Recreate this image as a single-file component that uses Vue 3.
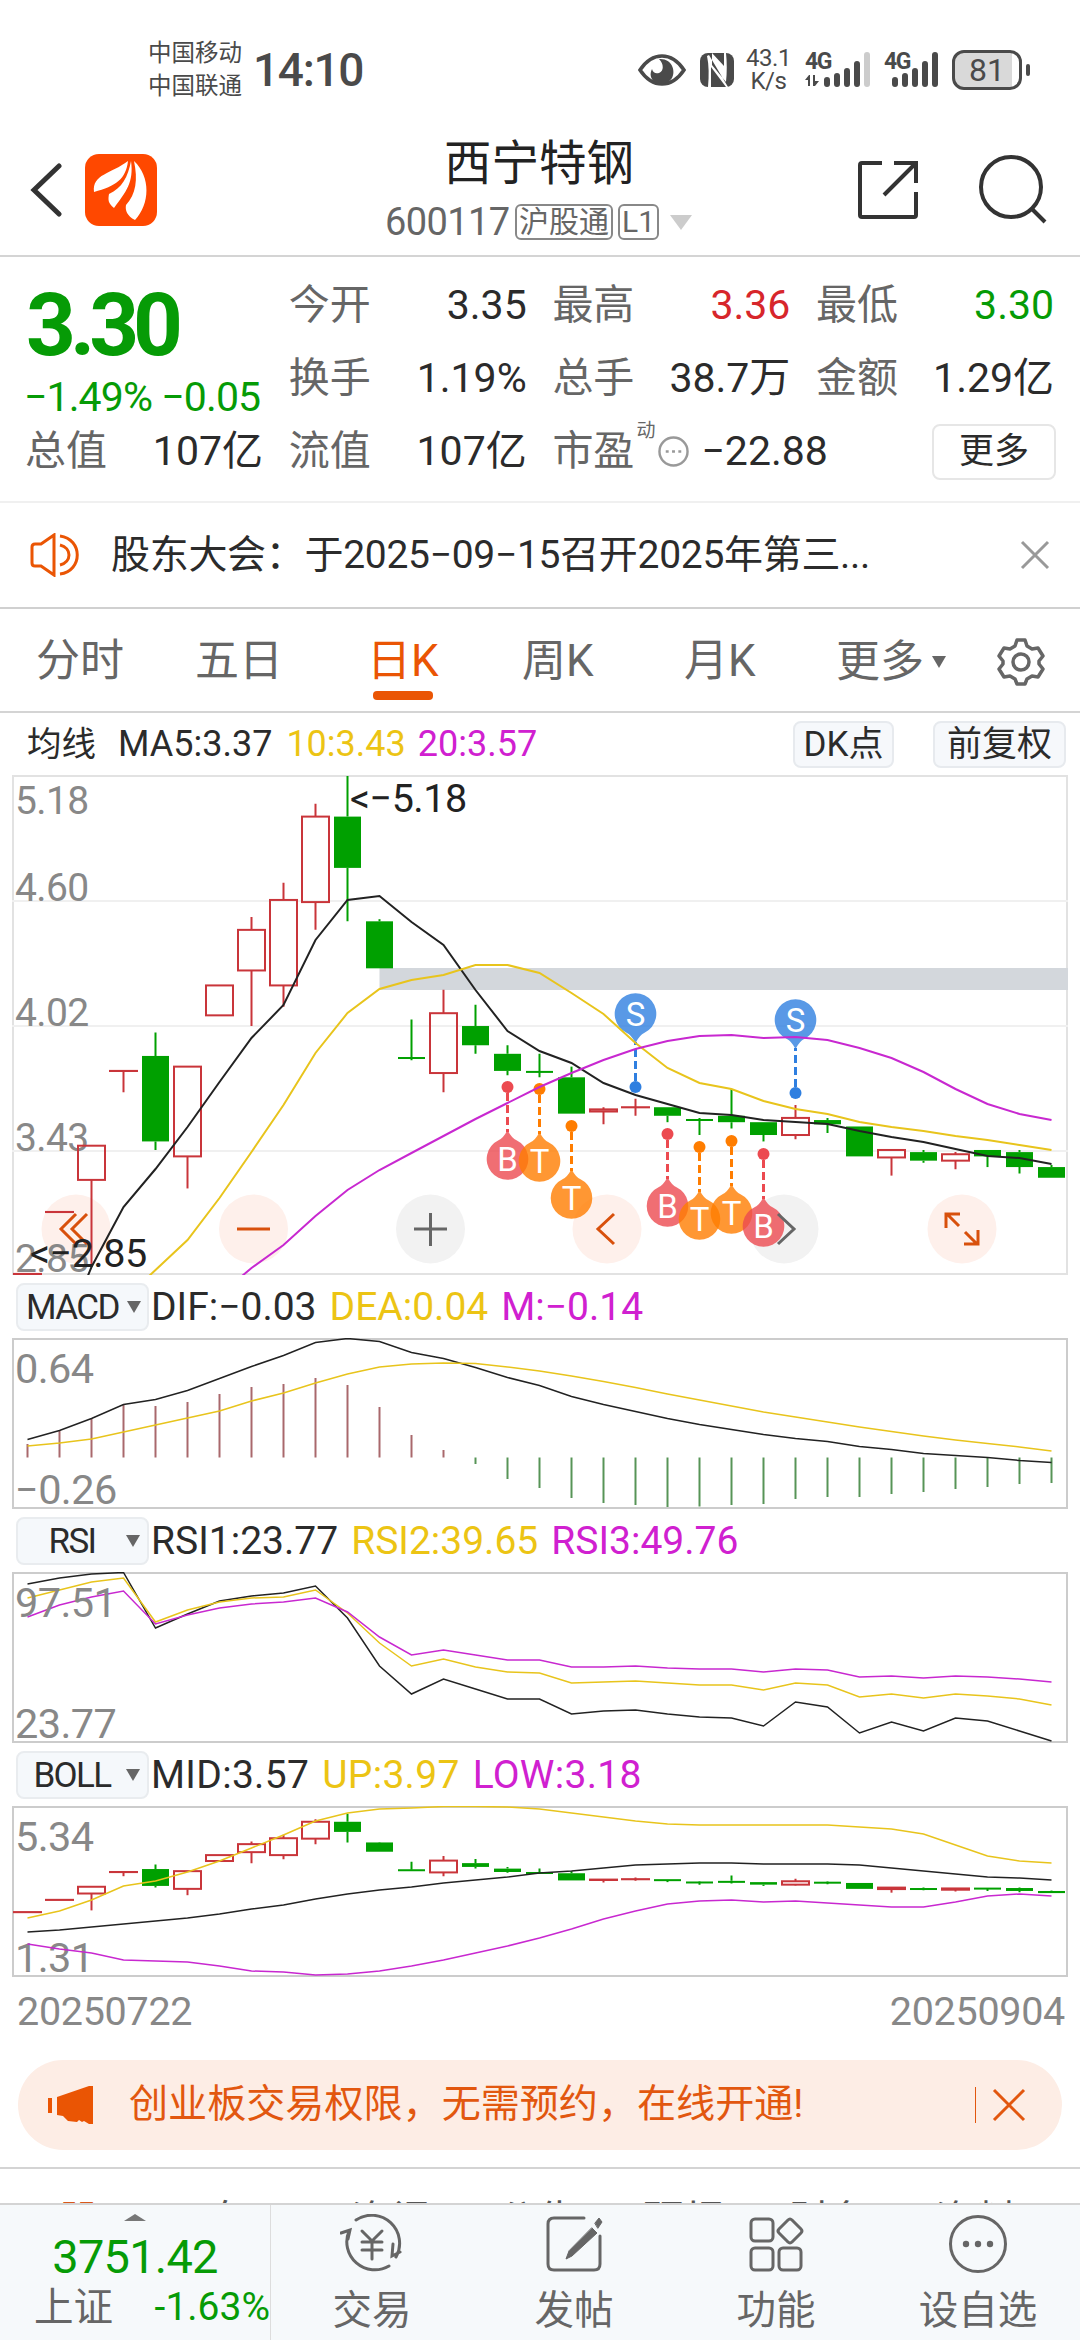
<!-- StockDetail -->
<template>
    <div class="page">
        <div class="status">
            <div class="carriers">
                <span>中国移动</span>
                <span>中国联通</span>
            </div>
            <span class="clock">14:10</span>
            <div class="status-right">
                <svg class="eye" viewBox="0 0 48 34">
                    <path d="M2 17C8 8 15 3 24 3s16 5 22 14c-6 9-13 14-22 14S8 26 2 17z" fill="none" stroke="#4a4a4a" stroke-width="3.6" />
                    <path d="M21 6c13-1 17 12 13 19-5 8-18 8-21-1-1-3 0-6 1-8 1 4 4 5 7 4 5-2 5-9 0-14z" fill="#4a4a4a" />
                </svg>
                <svg class="nfc" viewBox="0 0 34 34">
                    <rect width="34" height="34" rx="8" fill="#4a4a4a" />
                    <path d="M7 3c2 9 2 20 1 31h3V14l15 20h2L9 2zM12 0l12 13V0h2c1 9 1 20 0 29L12 12z" fill="#fff" />
                </svg>
                <div class="speed"><span>43.1</span><span>K/s</span></div>
                <svg class="signal" viewBox="0 0 66 38">
                    <text x="0" y="18" class="net">4G</text>
                    <path d="M0 29l4-5h1v11H3v-6zM8 24h2v6h4l-4 5H8z" fill="#4a4a4a" />
                    <path d="M22 29v4M32 25v8M42 20v13M52 13v20" class="bars" />
                    <path d="M62 4v29" class="bars off" />
                </svg>
                <svg class="signal second" viewBox="0 0 56 38">
                    <text x="0" y="18" class="net">4G</text>
                    <path d="M11 29v4M21 25v8M31 20v13M41 13v20M51 4v29" class="bars" />
                </svg>
                <div class="battery"><span>81</span></div>
                <i class="battery-cap"></i>
            </div>
        </div>

        <header class="header">
            <svg class="back" viewBox="0 0 32 54"><path d="M29 3L4 27l25 24" /></svg>
            <svg class="logo" viewBox="0 0 72 72">
                <rect width="72" height="72" rx="14" fill="#ff4800" />
                <path d="M9 38C7 20 26 20 43 7 41 25 31 32 9 38z" fill="#fff" />
                <path d="M29 54C23 49 23 46 24 40 37 34 43 23 46 7c3 21-5 31-17 47z" fill="#fff" />
                <path d="M50 66c-8-4-10-10-9-15 10-11 12-25 8-44 17 16 16 43 1 59z" fill="#fff" />
            </svg>
            <div class="heading">
                <h1>西宁特钢</h1>
                <div class="code">
                    <span class="num">600117</span>
                    <span class="tag">沪股通</span>
                    <span class="tag level">L1</span>
                    <i class="caret"></i>
                </div>
            </div>
            <svg class="share" viewBox="0 0 60 60">
                <path d="M24 3H4q-2 0-2 2v50q0 2 2 2h52q2 0 2-2V32M36 3h22v20M57 4L26 35" />
            </svg>
            <svg class="search" viewBox="0 0 70 70">
                <circle cx="33" cy="32" r="30" /><path d="M54 54l13 13" />
            </svg>
        </header>

        <section class="quote">
            <div class="price">
                <strong>3.30</strong>
                <span>−1.49% −0.05</span>
            </div>
            <div v-for="q in quotes" :key="q.label" class="cell">
                <label>{{ q.label }}</label>
                <span :class="q.tone">{{ q.value }}</span>
            </div>
            <div class="cell pe">
                <label>市盈</label>
                <sup>动</sup>
                <svg viewBox="0 0 32 32">
                    <circle cx="16" cy="16" r="14.500" />
                    <path d="M8 16h3M14.500 16h3M21 16h3" />
                </svg>
                <span>−22.88</span>
            </div>
            <div class="cell last"><button class="more">更多</button></div>
        </section>

        <div class="notice">
            <svg class="speaker" viewBox="0 0 50 44">
                <path d="M11 11L24 2v40L11 33H5q-3 0-3-3V14q0-3 3-3z" />
                <path d="M30 3c23 3 23 35 0 38M30 12c12 3 12 17 0 20" />
            </svg>
            <p>股东大会：于2025−09−15召开2025年第三...</p>
            <svg class="close" viewBox="0 0 30 30"><path d="M2 2l26 26M28 2L2 28" /></svg>
        </div>

        <nav class="tabs">
            <a v-for="t in tabs" :key="t" :class="{ active: t === current }" @click="current = t"><span>{{ t }}</span></a>
            <a class="tab-more">更多<i></i></a>
            <svg class="gear" viewBox="0 0 48 48">
                <path d="M20 2h8l2 6 5 3 6-1 5 8-4 5v3l4 5-5 8-6-1-5 3-2 5h-8l-2-5-5-3-6 1-5-8 4-5v-3l-4-5 5-8 6 1 5-3z" />
                <circle cx="24" cy="24" r="8" />
            </svg>
        </nav>

        <div class="ma-row">
            <span class="ma-name">均线</span>
            <span class="ma5">MA5:3.37</span>
            <span class="yellow">10:3.43</span>
            <span class="purple">20:3.57</span>
            <button class="dk">DK点</button>
            <button class="adj">前复权</button>
        </div>

        <svg class="chart main" viewBox="0 0 1056 500">
            <path d="M0 126h1056M0 251h1056M0 376h1056" stroke="#f0f0f0" stroke-width="2" />
            <rect x="367.500" y="193" width="688.500" height="22" fill="#d3d7dc" />
            <circle v-for="b in buttons" :key="b.x" :cx="b.x" cy="454" r="34.500" :fill="b.grey ? '#f2f2f2' : '#fef0eb'" />
            <g class="axis">
                <text x="3" y="39">5.18</text>
                <text x="3" y="126">4.60</text>
                <text x="3" y="251">4.02</text>
                <text x="3" y="376">3.43</text>
                <text x="3" y="497">2.85</text>
            </g>
            <g v-for="(c, i) in mainCandles" :key="i" :class="c.up ? 'up' : 'down'">
                <path :d="c.wick" />
                <rect :x="c.x" :y="c.y" :width="c.w" :height="c.h" />
            </g>
            <polyline :points="line(ma5, 1)" class="l-black" />
            <g class="pins">
                <g v-for="p in pins" :key="p.i" :class="p.t" :transform="`translate(${px(p.i)} ${p.y})`">
                    <circle r="6" />
                    <path :d="p.t === 'S' ? 'M0-6V-45' : 'M0 6V45'" class="dash" />
                    <g :transform="p.t === 'S' ? 'translate(0 -73)' : 'translate(0 72)'">
                        <path :transform="p.t === 'S' ? 'rotate(180)' : ''"
                            d="M0-29Q4-21 9-18.700A20.800 20.800 0 1 1-9-18.700Q-4-21 0-29z" class="drop" />
                        <text y="12">{{ p.t }}</text>
                    </g>
                </g>
            </g>
            <polyline :points="line(ma10, 3)" class="l-yellow" />
            <polyline :points="line(ma20, 6)" class="l-purple" />
            <g class="btn-icons">
                <path d="M64 439L49 454l15 15M75 439L60 454l15 15M225 454h33" />
                <path d="M602 439L586 454l16 15M947 451l-12-12M934 453v-14h14M953 457l12 12M966 455v14h-14" />
                <path d="M402 454h33M418.500 438v33M766 439l16 15-16 15" class="grey" />
            </g>
            <g class="mark">
                <text x="338" y="37">&lt;−5.18</text>
                <text x="18" y="492">&lt;−2.85</text>
            </g>
        </svg>

        <div class="ind-row">
            <button><b>MACD</b><i></i></button>
            <span>DIF:−0.03</span><span class="yellow">DEA:0.04</span><span class="purple">M:−0.14</span>
        </div>
        <svg class="chart sub" viewBox="0 0 1056 171">
            <g class="axis"><text x="3" y="45">0.64</text><text x="3" y="166">−0.26</text></g>
            <path v-for="(y, i) in macdBars" :key="i" :d="`M${px(i)} 119.5V${y}`" :stroke="y < 119 ? '#a9686c' : '#579457'" stroke-width="2" />
            <polyline :points="line(dif)" class="l-black" />
            <polyline :points="line(dea)" class="l-yellow" />
        </svg>

        <div class="ind-row">
            <button><b>RSI</b><i></i></button>
            <span>RSI1:23.77</span><span class="yellow">RSI2:39.65</span><span class="purple">RSI3:49.76</span>
        </div>
        <svg class="chart sub" viewBox="0 0 1056 171">
            <polyline :points="line(rsi1)" class="l-black" />
            <polyline :points="line(rsi2)" class="l-yellow" />
            <polyline :points="line(rsi3)" class="l-purple" />
            <g class="axis"><text x="3" y="45">97.51</text><text x="3" y="166">23.77</text></g>
        </svg>

        <div class="ind-row boll">
            <button><b>BOLL</b><i></i></button>
            <span>MID:3.57</span><span class="yellow">UP:3.97</span><span class="purple">LOW:3.18</span>
        </div>
        <svg class="chart sub" viewBox="0 0 1056 171">
            <g class="axis"><text x="3" y="45">5.34</text><text x="3" y="166">1.31</text></g>
            <g v-for="(c, i) in bollCandles" :key="i" :class="c.up ? 'up' : 'down'">
                <path :d="c.wick" />
                <rect :x="c.x" :y="c.y" :width="c.w" :height="c.h" />
            </g>
            <polyline :points="line(bollMid)" class="l-black" />
            <polyline :points="line(bollUp)" class="l-yellow" />
            <polyline :points="line(bollLow)" class="l-purple" />
        </svg>

        <div class="dates"><span>20250722</span><span>20250904</span></div>

        <div class="banner">
            <svg class="horn" viewBox="0 0 46 40">
                <path d="M0 13h4v15H0zM9 12L41 1h4v38h-4l-5-3-2 1-3-2-2 2-9-1-5-5-6-1z" />
            </svg>
            <p>创业板交易权限，无需预约，在线开通!</p>
            <i class="bar"></i>
            <svg class="close" viewBox="0 0 34 34"><path d="M2 2l30 30M32 2L2 32" /></svg>
        </div>

        <div class="strip">
            <span v-for="(s, i) in strip" :key="s" :class="{ active: i === 0 }">{{ s }}</span>
        </div>

        <footer class="footer">
            <div class="index">
                <i></i>
                <strong>3751.42</strong>
                <div><span>上证</span><em>-1.63%</em></div>
            </div>
            <a>
                <svg viewBox="0 0 64 60">
                    <path d="M16 6A28 28 0 0 1 56 43M60 38l-8 4 1-12M49 52A28 28 0 0 1 9 17M1 19l9-3-2 9" />
                    <path d="M22 17l10 10 10-10M22 28h20M22 36h20M32 27v18" />
                </svg>
                交易
            </a>
            <a>
                <svg viewBox="0 0 64 60">
                    <path d="M42 4H12q-6 0-6 6v40q0 6 6 6h40q6 0 6-6V22" />
                    <path d="M50 14l5 5-25 23-6 3 3-8zM53 9l4-5 3 4-4 6z" fill="#666" stroke-width="1" />
                </svg>
                发帖
            </a>
            <a>
                <svg viewBox="0 0 64 60">
                    <rect x="7" y="5" width="22" height="22" rx="4" />
                    <rect x="7" y="34" width="22" height="22" rx="4" />
                    <rect x="35" y="34" width="22" height="22" rx="4" />
                    <path d="M44 6q2-2 4 0l9 9q2 2 0 4l-9 9q-2 2-4 0l-9-9q-2-2 0-4z" />
                </svg>
                功能
            </a>
            <a>
                <svg viewBox="0 0 64 60">
                    <circle cx="32" cy="30" r="27.500" />
                    <g class="dots"><circle cx="20" cy="30" r="3.200" /><circle cx="32" cy="30" r="3.200" /><circle cx="44" cy="30" r="3.200" /></g>
                </svg>
                设自选
            </a>
        </footer>
    </div>
</template>

<script setup>
import { ref } from 'vue';

const tabs = ['分时', '五日', '日K', '周K', '月K'];
const current = ref('日K');
const strip = ['股吧', '盘口', '资讯', '公告', '研报', '财务', '资料'];

const quotes = [
    { label: '今开', value: '3.35' },
    { label: '最高', value: '3.36', tone: 'red' },
    { label: '最低', value: '3.30', tone: 'green' },
    { label: '换手', value: '1.19%' },
    { label: '总手', value: '38.7万' },
    { label: '金额', value: '1.29亿' },
    { label: '总值', value: '107亿' },
    { label: '流值', value: '107亿' },
];

const buttons = [
    { x: 64 }, { x: 241.5 }, { x: 418.5, grey: true },
    { x: 595 }, { x: 772, grey: true }, { x: 950 },
];

// open, close, high, low
const days = [
    [2.85, 2.85, 2.85, 2.85], [3.14, 3.14, 3.14, 3.14], [3.29, 3.45, 3.45, 2.89], [3.8, 3.8, 3.8, 3.7],
    [3.87, 3.47, 3.98, 3.43], [3.4, 3.82, 3.82, 3.25], [4.06, 4.2, 4.2, 4.06], [4.27, 4.46, 4.52, 4.01],
    [4.2, 4.6, 4.68, 4.1], [4.59, 4.99, 5.05, 4.46], [4.99, 4.75, 5.18, 4.5], [4.5, 4.28, 4.51, 4.28],
    [3.865, 3.86, 4.04, 3.85], [3.79, 4.07, 4.18, 3.7], [4.01, 3.92, 4.11, 3.88], [3.88, 3.8, 3.92, 3.78],
    [3.8, 3.795, 3.88, 3.77], [3.77, 3.6, 3.82, 3.6], [3.61, 3.62, 3.63, 3.55], [3.63, 3.63, 3.67, 3.59],
    [3.63, 3.59, 3.63, 3.56], [3.575, 3.57, 3.58, 3.5], [3.59, 3.56, 3.715, 3.53], [3.56, 3.5, 3.56, 3.47],
    [3.5, 3.58, 3.64, 3.48], [3.57, 3.55, 3.58, 3.51], [3.54, 3.4, 3.54, 3.4], [3.395, 3.43, 3.43, 3.31],
    [3.42, 3.38, 3.43, 3.37], [3.38, 3.41, 3.42, 3.34], [3.43, 3.4, 3.43, 3.35], [3.42, 3.35, 3.43, 3.32],
    [3.35, 3.3, 3.36, 3.3],
];

const px = (i) => +(15.5 + i * 32).toFixed(1);
const line = (ys, from = 0) => ys.map((y, i) => `${px(i + from)},${y}`).join(' ');

const candles = (top, scale) => days.map(([open, close, high, low], i) => {
    const y = (p) => (top - p) * scale + 1;
    const up = close >= open;
    const t = y(Math.max(open, close));
    const b = y(Math.min(open, close));
    const x = px(i);
    // rising bodies are hollow, so only the wick outside of the body is drawn
    return {
        up,
        wick: `M${x} ${y(high)}V${t}M${x} ${b}V${y(low)}`,
        x: x - 13.5,
        y: t,
        w: 27,
        h: up ? Math.max(b - t, 0.1) : Math.max(b - t, 2),
    };
});
const mainCandles = candles(5.18, 213.7);
const bollCandles = candles(5.34, 42.2);

const ma5 = [570, 492, 432, 394, 352, 307, 263, 230, 165, 125, 121, 147, 170, 215, 256, 276, 288, 308, 320, 329, 338, 340, 345, 347, 349, 356, 362, 367, 374, 381, 383, 389];
const ma10 = [525, 495, 465, 423, 377, 330, 278, 238, 214, 205, 200, 190, 190, 198, 218, 239, 268, 293, 308, 314, 326, 334, 339, 347, 352, 356, 361, 365, 370, 375];
const ma20 = [520, 493, 470, 441, 415, 395, 378, 361, 344, 328, 312, 298, 285, 274, 266, 261, 260, 263, 262, 265, 273, 283, 297, 314, 329, 339, 345];

const pins = [
    { t: 'B', i: 15, y: 312 }, { t: 'T', i: 16, y: 314 }, { t: 'T', i: 17, y: 351 },
    { t: 'S', i: 19, y: 312 }, { t: 'B', i: 20, y: 359 }, { t: 'T', i: 21, y: 372 },
    { t: 'T', i: 22, y: 366 }, { t: 'B', i: 23, y: 379 }, { t: 'S', i: 24, y: 318 },
];

const dif = [101.5, 92.5, 80.5, 66.5, 61.5, 52.5, 40.5, 28.5, 17.5, 4.5, 0.5, 3.5, 14.5, 20.5, 29.5, 39.5, 47.5, 58.5, 66.5, 73.5, 80.5, 86.5, 91.5, 96.5, 100.5, 103.5, 108.5, 111.5, 115.5, 117.5, 119.5, 122.5, 124.5];
const dea = [108, 105, 101, 94, 87, 80, 73, 63, 55, 45, 36, 29, 26, 25, 25.5, 29, 33, 38, 43.5, 49.5, 56, 62, 68, 74, 79, 84, 89, 93.5, 98, 102, 105.5, 109, 113];
const macdBars = [106, 93, 81, 67, 68, 64, 56, 49, 46, 40, 47, 69, 97, 112, 126, 141, 150, 160, 165, 167, 169, 168.5, 167, 166, 161, 159, 159, 156, 154, 151, 149, 146, 145];

const rsi1 = [12, 6, 2, 0.5, 56, 42, 29, 24, 21, 14, 46, 94, 122, 107, 117, 127, 127, 142, 139, 138, 142, 145, 146, 154, 130, 135, 161, 150, 159, 146, 149, 159, 169];
const rsi2 = [26, 18, 10, 6, 50, 38, 30, 26, 25, 18, 41, 71, 94, 87, 95, 100, 101, 111, 110, 109, 111, 113, 113, 118, 111, 113, 125, 122, 126, 122, 124, 127, 133];
const rsi3 = [45, 33, 25, 19, 52, 43, 36, 32, 30, 26, 40, 65, 83, 78, 83, 88, 88, 95, 95, 94, 96, 97, 97, 100, 97, 98, 105, 104, 106, 104, 105, 107, 110];

const bollUp = [112, 105, 94, 80, 75, 66, 55, 42, 29, 15, 7, 3, 2, 0.5, 0.5, 1, 3, 7, 11, 15, 18, 19, 19, 19, 19, 19, 21, 23, 28, 39, 50, 55, 57];
const bollMid = [126, 124, 121, 118, 115, 112, 108, 103, 99, 93, 88, 84, 81, 77, 74, 71, 67, 65, 62, 59, 58, 57, 57, 58, 58, 58, 59, 62, 65, 68, 71, 72, 74];
const bollLow = [138, 143, 147, 154, 155, 156, 160, 165, 166, 169, 168, 165, 160, 154, 147, 140, 132, 123, 113, 105, 98, 95, 94, 96, 95, 97, 99, 101, 101, 96, 90, 88, 90];
</script>

<style>
body {
    margin: 0;
    background: #fff;
}
</style>

<style scoped>
.page {
    width: 1080px;
    height: 2340px;
    overflow: hidden;
    display: flex;
    flex-direction: column;
    background: #fff;
    color: #2b2b2b;
    font-family: Roboto, "Noto Sans CJK SC", sans-serif;
    line-height: 1;
}

.page > * {
    flex: none;
    box-sizing: border-box;
}

button {
    box-sizing: border-box;
    padding: 0;
    font-family: inherit;
    color: inherit;
    line-height: 1;
    white-space: nowrap;
}

p {
    margin: 0;
    white-space: nowrap;
}

svg {
    display: block;
    flex: none;
}

/* status bar */
.status {
    height: 140px;
    padding: 0 50px 0 148px;
    display: flex;
    align-items: center;
    color: #4a4a4a;
}

.carriers {
    display: flex;
    flex-direction: column;
    gap: 10px;
    font-size: 23.5px;
}

.clock {
    margin-left: 11px;
    font-size: 46px;
    font-weight: 500;
    letter-spacing: -1.3px;
}

.status-right {
    margin-left: auto;
    display: flex;
    align-items: center;
}

.eye {
    width: 48px;
    height: 34px;
    margin-right: 14px;
}

.nfc {
    width: 34px;
    height: 34px;
    margin-right: 13px;
}

.speed {
    width: 43px;
    display: flex;
    flex-direction: column;
    align-items: center;
    font-size: 24px;
    line-height: 23px;
    letter-spacing: -0.5px;
    margin-right: 15px;
}

.signal {
    width: 66px;
    height: 38px;
    margin-right: 13px;
}

.signal.second {
    width: 56px;
    margin-right: 12px;
}

.net {
    font-size: 23px;
    font-weight: 700;
    fill: #4a4a4a;
    letter-spacing: -1.5px;
}

.bars {
    stroke: #4a4a4a;
    stroke-width: 6;
    stroke-linecap: round;
}

.off {
    stroke: #ccc;
}

.battery {
    width: 70px;
    height: 40px;
    box-sizing: border-box;
    border: 3px solid #4a4a4a;
    border-radius: 12px;
    background: linear-gradient(90deg, #d9d9d9 57px, #fff 57px);
    display: flex;
    align-items: center;
    justify-content: center;
    font-size: 32px;
}

.battery-cap {
    width: 4px;
    height: 12px;
    margin-left: 4px;
    border-radius: 2px;
    background: #4a4a4a;
}

/* header */
.header {
    height: 117px;
    padding: 0 34px 16px 30px;
    border-bottom: 2px solid #d4d4d4;
    display: flex;
    align-items: center;
}

.back {
    width: 32px;
    height: 54px;
    fill: none;
    stroke: #333;
    stroke-width: 5;
    stroke-linecap: round;
}

.logo {
    width: 72px;
    height: 72px;
    margin-left: 23px;
}

.heading {
    flex: 1;
    margin-left: 228px;
    display: flex;
    flex-direction: column;
}

h1 {
    margin: 2px 0 16px 59px;
    font-size: 47.5px;
    font-weight: 400;
    color: #222;
    line-height: 47px;
}

.code {
    display: flex;
    align-items: center;
    color: #666;
    height: 36px;
}

.code .num {
    font-size: 38px;
    letter-spacing: -0.6px;
    width: 130px;
}

.tag {
    box-sizing: border-box;
    width: 98px;
    height: 36px;
    border: 2px solid #888;
    border-radius: 6px;
    font-size: 30px;
    line-height: 31px;
    text-align: center;
}

.level {
    width: 41px;
    margin-left: 5px;
}

.caret {
    margin-left: 11px;
    border: 11px solid transparent;
    border-top: 15px solid #ccc;
    border-bottom: 0;
}

.share,
.search {
    fill: none;
    stroke: #333;
    stroke-width: 4;
}

.share {
    width: 60px;
    height: 60px;
    margin-right: 60px;
}

.search {
    width: 70px;
    height: 70px;
    margin-right: -2px;
}

/* quote grid */
.quote {
    height: 246px;
    padding: 12px 26px 13px;
    border-bottom: 2px solid #f0f0f0;
    display: grid;
    grid-template-columns: repeat(4, 237px);
    grid-template-rows: repeat(3, 73px);
    column-gap: 26.7px;
}

.price {
    grid-row: 1 / 3;
    display: flex;
    flex-direction: column;
    color: #069b06;
    padding-top: 12px;
    white-space: nowrap;
}

.price strong {
    font-size: 87px;
    font-weight: 700;
    letter-spacing: -6px;
    line-height: 88px;
}

.price span {
    margin: 8px 0 0 -2px;
    font-size: 41px;
    letter-spacing: -0.9px;
}

.cell {
    display: flex;
    align-items: center;
    justify-content: space-between;
    font-size: 41px;
    white-space: nowrap;
}

.cell label {
    color: #666;
    margin-left: -1px;
}

.cell span {
    letter-spacing: 0;
}

.cell .red {
    color: #d7262b;
}

.cell .green {
    color: #069b06;
}

.pe {
    justify-content: flex-start;
    width: 300px;
}

.pe sup {
    align-self: flex-start;
    margin: 6px 3px 0 2px;
    font-size: 19px;
    line-height: 20px;
    color: #666;
}

.pe svg {
    width: 31px;
    height: 31px;
    margin-right: 12px;
    fill: none;
    stroke: #999;
    stroke-width: 2.5;
}

.last {
    justify-content: flex-end;
}

.more {
    width: 124px;
    height: 56px;
    margin-right: -2px;
    border: 2px solid #e6e6e6;
    border-radius: 8px;
    background: #fff;
    font-size: 35px;
}

/* notice */
.notice {
    height: 106px;
    padding: 0 30px;
    border-bottom: 2px solid #d0d0d0;
    display: flex;
    align-items: center;
}

.speaker {
    width: 50px;
    height: 44px;
    fill: none;
    stroke: #ea5504;
    stroke-width: 3;
}

.notice p {
    flex: 1;
    margin-left: 31px;
    font-size: 39px;
    letter-spacing: -0.3px;
}

.notice .close {
    width: 30px;
    height: 30px;
    stroke: #999;
    stroke-width: 3;
}

/* period tabs */
.tabs {
    height: 104px;
    padding: 3px 0 0 36px;
    border-bottom: 2px solid #d4d4d4;
    display: grid;
    grid-template-columns: 159px 172px 155px 162px 152px 161px 48px;
    align-items: center;
    color: #666;
    font-size: 44px;
}

.tabs a {
    height: 76px;
    line-height: 74px;
    white-space: nowrap;
}

.tabs a span {
    display: inline-block;
    height: 76px;
}

.tabs .active span {
    color: #ea5504;
}

.tabs .active span::after {
    content: "";
    display: block;
    width: 60px;
    height: 9px;
    margin: -7px auto 0;
    border-radius: 4px;
    background: #ea5504;
}

.tab-more {
    display: flex;
    align-items: center;
}

.tab-more i {
    margin-left: 8px;
    border: 7.5px solid transparent;
    border-top: 12px solid #666;
    border-bottom: 0;
}

.gear {
    width: 48px;
    height: 48px;
    fill: none;
    stroke: #666;
    stroke-width: 3.5;
    stroke-linejoin: round;
}

/* moving averages */
.ma-row {
    height: 62px;
    padding: 0 14px 0 27px;
    display: flex;
    align-items: center;
    font-size: 36px;
}

.ma-name {
    font-size: 34.5px;
}

.ma5 {
    margin: 0 14px 0 22px;
}

.yellow {
    color: #ecc414;
}

.purple {
    color: #d020d0;
}

.ma-row .purple {
    margin-left: 12px;
}

.ma-row button {
    height: 47px;
    border: 2px solid #e7eaee;
    border-radius: 8px;
    background: #f6f8fb;
    font-size: 35px;
}

.dk {
    width: 101px;
    margin-left: auto;
}

.adj {
    width: 133px;
    margin-left: 39px;
}

/* charts */
.chart {
    margin-left: 12px;
    width: 1056px;
    box-shadow: inset 0 0 0 2px #ccc;
    fill: none;
}

.main {
    height: 500px;
    box-shadow: inset 0 0 0 2px #e2e2e2;
}

.sub {
    height: 171px;
}

.axis text {
    fill: #888;
    font-size: 39px;
    letter-spacing: -0.6px;
}

.sub .axis text {
    font-size: 41.5px;
}

.mark text {
    fill: #222;
    font-size: 39.5px;
    letter-spacing: -0.5px;
}

.up {
    stroke: #c9353a;
    stroke-width: 2;
}

.down {
    stroke: #00a000;
    stroke-width: 2;
}

.down rect {
    fill: #00a000;
    stroke: none;
}

.l-black {
    stroke: #222;
    stroke-width: 2;
}

.l-yellow {
    stroke: #e8c41c;
    stroke-width: 2;
}

.l-purple {
    stroke: #c828d0;
    stroke-width: 2;
}

.sub polyline {
    stroke-width: 1.5;
}

.B { --pin: #ec4a50; }
.T { --pin: #ff7d00; }
.S { --pin: #2f7fe0; }

.pins circle {
    fill: var(--pin);
}

.drop {
    fill: var(--pin);
    opacity: 0.8;
}

.dash {
    stroke: var(--pin);
    stroke-width: 3;
    stroke-dasharray: 8 4;
}

.pins text {
    fill: #fff;
    font-size: 33px;
    text-anchor: middle;
}

.btn-icons {
    stroke: #d8500c;
    stroke-width: 3;
}

.grey {
    stroke: #666;
}

/* indicator captions */
.ind-row {
    height: 63px;
    padding: 1px 0 0 16px;
    display: flex;
    align-items: center;
    font-size: 39px;
}

.ind-row.boll {
    letter-spacing: 0.3px;
}

.ind-row button {
    width: 133px;
    height: 48px;
    margin-right: 2px;
    padding: 0 7px 0 8px;
    border: 2px solid #e9ecef;
    border-radius: 8px;
    background: #f5f8fb;
    display: flex;
    align-items: center;
}

.ind-row b {
    flex: 1;
    font-size: 35px;
    font-weight: 400;
    letter-spacing: -1.6px;
}

.ind-row i {
    margin-left: 8px;
    border: 7px solid transparent;
    border-top: 12px solid #666;
    border-bottom: 0;
}

.ind-row span + span {
    margin-left: 13px;
}

.dates {
    height: 83px;
    padding: 15px 15px 0 17px;
    display: flex;
    justify-content: space-between;
    font-size: 39.5px;
    letter-spacing: -0.3px;
    line-height: 40px;
    color: #888;
}

/* banner */
.banner {
    height: 90px;
    margin: 0 18px;
    padding: 0 36px 0 30px;
    border-radius: 45px;
    background: #fdede5;
    color: #e2570f;
    display: flex;
    align-items: center;
    font-size: 39.1px;
}

.horn {
    width: 46px;
    height: 40px;
    fill: #ea5504;
}

.banner p {
    flex: 1;
    margin-left: 35px;
}

.bar {
    width: 1px;
    height: 36px;
    margin-right: 16px;
    background: #e2570f;
}

.banner .close {
    width: 34px;
    height: 34px;
    stroke: #e2570f;
    stroke-width: 3;
}

/* section tabs, mostly under the footer */
.strip {
    height: 36px;
    margin-top: 17px;
    padding: 32px 0 0 59px;
    border-top: 2px solid #d4d4d4;
    overflow: hidden;
    display: flex;
    font-size: 41px;
    color: #555;
}

.strip span {
    flex: none;
    width: 146px;
}

.strip .active {
    color: #d8581c;
}

/* footer */
.footer {
    height: 137px;
    border-top: 2px solid #d4d4d4;
    background: #f6f9fb;
    display: grid;
    grid-template-columns: 271px repeat(4, 202px);
    color: #666;
    font-size: 39.5px;
}

.index {
    border-right: 1px solid #ddd;
    display: flex;
    flex-direction: column;
    align-items: center;
    padding-top: 9px;
}

.index i {
    border: 11px solid transparent;
    border-bottom: 7px solid #777;
    border-top: 0;
}

.index strong {
    margin-top: 12px;
    font-size: 47px;
    font-weight: 400;
    letter-spacing: -0.8px;
    color: #069b06;
}

.index div {
    align-self: stretch;
    margin-top: 8px;
    padding: 0 0 0 34px;
    display: flex;
    justify-content: space-between;
}

.index em {
    font-style: normal;
    font-size: 39px;
    color: #069b06;
}

.footer a {
    display: flex;
    flex-direction: column;
    align-items: center;
    gap: 17px;
    padding-top: 9px;
}

.footer a svg {
    width: 64px;
    height: 60px;
    fill: none;
    stroke: #666;
    stroke-width: 3;
    stroke-linecap: round;
}

.footer .dots {
    fill: #666;
    stroke: none;
}
</style>
